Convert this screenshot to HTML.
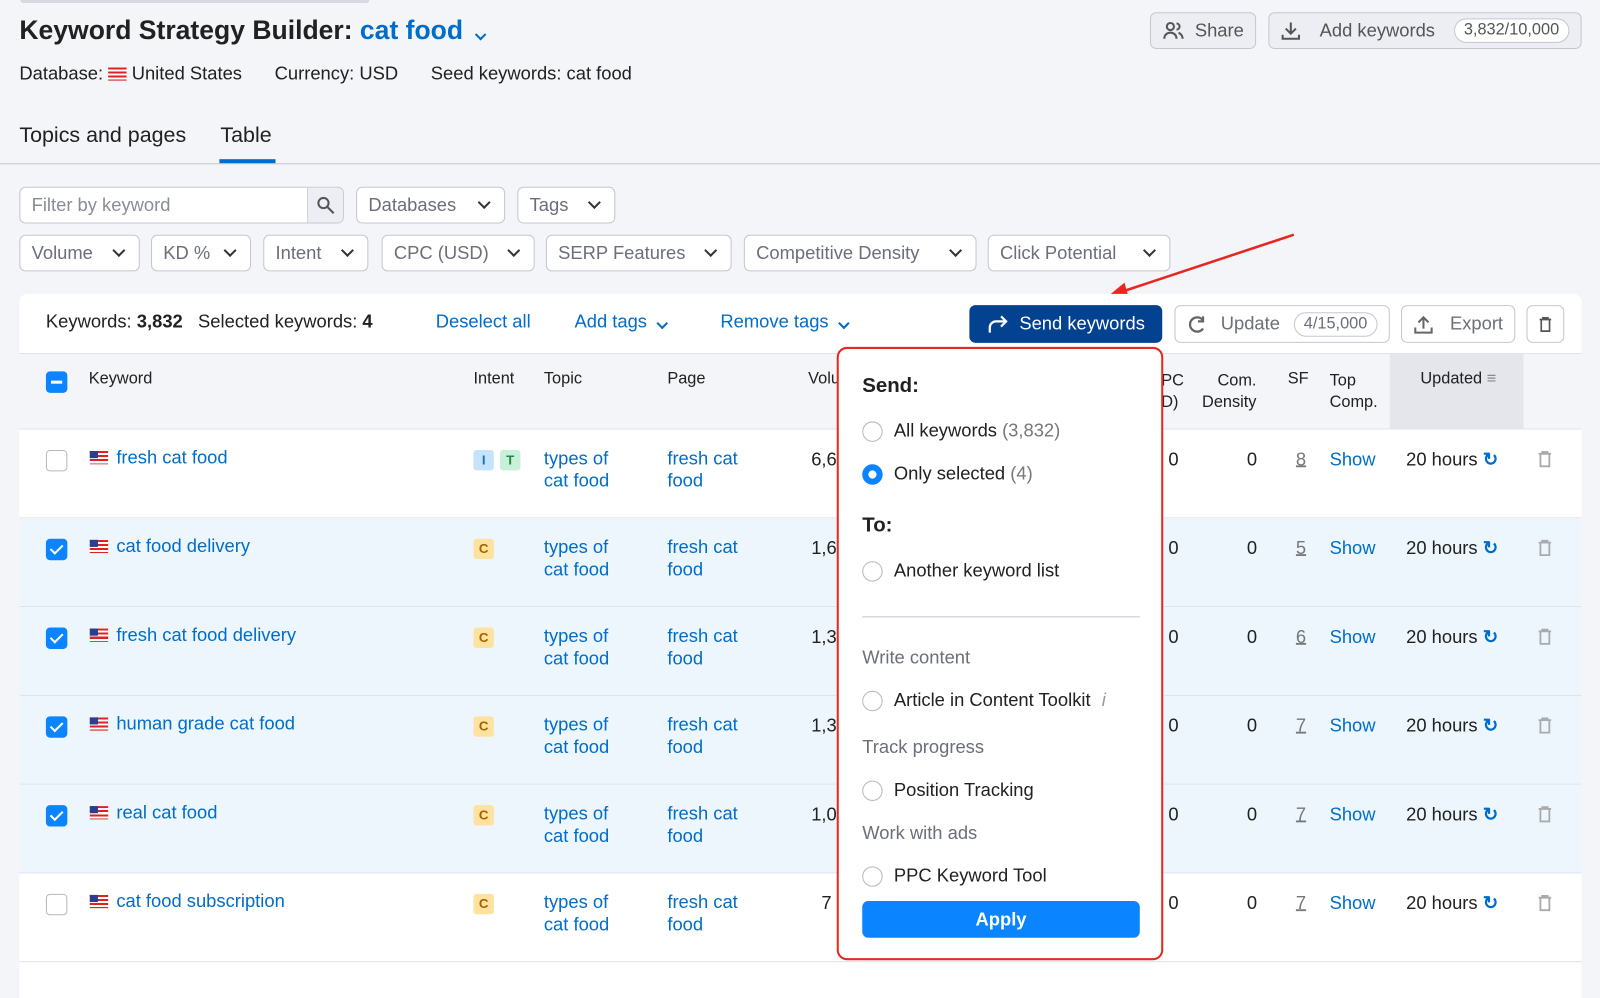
<!DOCTYPE html>
<html><head><meta charset="utf-8"><style>
*{box-sizing:border-box;margin:0;padding:0}
body{width:1600px;height:978px;overflow:hidden;background:#f4f5f9;font-family:"Liberation Sans",sans-serif;color:#212121;position:relative}
#w{position:absolute;left:0;top:0;width:1568px;height:960px;transform:scale(1.0204);transform-origin:0 0}
.a{position:absolute;white-space:nowrap}
.blue{color:#006dca}
.btn{position:absolute;border:1px solid #c4c7cf;border-radius:6px;background:#fff;height:36px;font-size:18px;color:#6c6e79;display:flex;align-items:center;padding:0 11px;justify-content:space-between}
.chev{display:inline-block;width:9px;height:9px;border-right:2.5px solid #333;border-bottom:2.5px solid #333;transform:rotate(45deg);margin:-5px 4px 0 14px}
.chevb{border-color:#006dca}
.row{position:absolute;left:19px;width:1531px;height:87px;border-bottom:1px solid #e0e1e9;font-size:18px}
.cb{position:absolute;left:26px;top:20px;width:21px;height:21px;border:1.5px solid #b5b8c2;border-radius:4px;background:#fff}
.cb.on{background:#0a84ff;border-color:#0a84ff}
.cb.on:after{content:"";position:absolute;left:6px;top:2px;width:5px;height:10px;border-right:2.5px solid #fff;border-bottom:2.5px solid #fff;transform:rotate(45deg)}
.flag{position:absolute;left:69px;top:21px;width:18px;height:13px;background:repeating-linear-gradient(#d22 0 2px,#fff 2px 4px)}
.flag:before{content:"";position:absolute;left:0;top:0;width:8px;height:7px;background:#2a3f8f}
.tag{position:absolute;top:20px;width:20px;height:20px;border-radius:3px;font-size:13px;font-weight:bold;text-align:center;line-height:20px}
.radio{position:absolute;left:845px;width:20px;height:20px;border:1.5px solid #b5b8c2;border-radius:50%;background:#fff}
.tr{position:absolute;left:1488px;top:20px}
</style></head><body><div id="w">
<div class="a" style="left:20px;top:0;width:342px;height:3px;background:#d8d9e0;border-radius:0 0 4px 4px"></div>
<div class="a" style="left:19px;top:14px;font-size:26px;font-weight:bold">Keyword Strategy Builder: <span class="blue">cat food</span> <span class="chev chevb" style="margin-left:6px;width:8px;height:8px"></span></div>
<div class="a" style="left:19px;top:62px;font-size:18px">Database: <span style="display:inline-block;width:18px;height:13px;background:repeating-linear-gradient(#d22 0 2px,#fff 2px 4px);position:relative;vertical-align:-1px"></span> United States<span style="margin-left:32px">Currency: USD</span><span style="margin-left:32px">Seed keywords: cat food</span></div>
<div class="btn" style="left:1127px;top:12px;width:104px;color:#555;background:#eceef3"><svg width="22" height="20" viewBox="0 0 22 20" fill="none" stroke="#555" stroke-width="2"><circle cx="8" cy="6" r="3.5"/><path d="M2 18c0-4 3-6 6-6s6 2 6 6M14 3a3 3 0 010 6M16 12c2 1 4 3 4 6"/></svg><span>Share</span></div>
<div class="btn" style="left:1243px;top:12px;width:307px;color:#555;background:#eceef3"><svg width="20" height="20" viewBox="0 0 20 20" fill="none" stroke="#555" stroke-width="2"><path d="M10 2v11M5 8l5 5 5-5M2 14v4h16v-4"/></svg><span>Add keywords</span><span style="border:1px solid #c4c7cf;border-radius:14px;padding:2px 9px;font-size:16px;background:#fff">3,832/10,000</span></div>
<div class="a" style="left:19px;top:121px;font-size:21px">Topics and pages</div>
<div class="a" style="left:216px;top:121px;font-size:21px">Table</div>
<div class="a" style="left:215px;top:156px;width:55px;height:4px;background:#006dca"></div>
<div class="a" style="left:0;top:160px;width:1600px;height:1px;background:#c4c7cf"></div>
<div class="btn" style="left:19px;top:183px;width:318px;padding:0"><span style="padding-left:11px;color:#8a8c96">Filter by keyword</span><span style="width:35px;height:34px;border-left:1px solid #c4c7cf;background:#eceef3;display:flex;align-items:center;justify-content:center;border-radius:0 6px 6px 0"><svg width="18" height="18" viewBox="0 0 18 18" fill="none" stroke="#555" stroke-width="2"><circle cx="7" cy="7" r="5"/><path d="M11 11l6 6"/></svg></span></div>
<div class="btn" style="left:349px;top:183px;width:146px">Databases<span class="chev"></span></div>
<div class="btn" style="left:507px;top:183px;width:96px">Tags<span class="chev"></span></div>
<div class="btn" style="left:19px;top:230px;width:118px">Volume<span class="chev"></span></div>
<div class="btn" style="left:148px;top:230px;width:98px">KD %<span class="chev"></span></div>
<div class="btn" style="left:258px;top:230px;width:103px">Intent<span class="chev"></span></div>
<div class="btn" style="left:374px;top:230px;width:150px">CPC (USD)<span class="chev"></span></div>
<div class="btn" style="left:535px;top:230px;width:182px">SERP Features<span class="chev"></span></div>
<div class="btn" style="left:729px;top:230px;width:228px">Competitive Density<span class="chev"></span></div>
<div class="btn" style="left:968px;top:230px;width:179px">Click Potential<span class="chev"></span></div>
<svg class="a" style="left:1080px;top:225px" width="195" height="70"><line x1="188" y1="5" x2="16" y2="62" stroke="#e8281e" stroke-width="2.5"/><polygon points="5,66 22,52 26,66" fill="#e8281e"/></svg>
<div class="a" style="left:19px;top:288px;width:1531px;height:690px;background:#fff;border-radius:8px 8px 0 0"></div>
<div class="a" style="left:45px;top:305px;font-size:18px">Keywords: <b>3,832</b>&nbsp;&nbsp;&nbsp;Selected keywords: <b>4</b></div>
<div class="a blue" style="left:427px;top:305px;font-size:18px">Deselect all</div>
<div class="a blue" style="left:563px;top:305px;font-size:18px">Add tags <span class="chev chevb" style="margin-left:6px;width:8px;height:8px"></span></div>
<div class="a blue" style="left:706px;top:305px;font-size:18px">Remove tags <span class="chev chevb" style="margin-left:6px;width:8px;height:8px"></span></div>
<div class="a" style="left:950px;top:299px;width:189px;height:37px;background:#034191;border-radius:6px;color:#fff;font-size:18px;display:flex;align-items:center;justify-content:center"><svg width="22" height="20" viewBox="0 0 22 20" fill="none" stroke="#fff" stroke-width="2.2"><path d="M3 18v-5a6 6 0 016-6h10M14 2l5 5-5 5"/></svg>&nbsp; Send keywords</div>
<div class="btn" style="left:1151px;top:299px;width:211px;height:37px"><svg width="20" height="20" viewBox="0 0 20 20" fill="none" stroke="#666" stroke-width="2.2"><path d="M16 6a7 7 0 100 8M16 2v5h-5"/></svg><span>Update</span><span style="border:1px solid #c4c7cf;border-radius:14px;padding:2px 9px;font-size:16px">4/15,000</span></div>
<div class="btn" style="left:1373px;top:299px;width:112px;height:37px"><svg width="20" height="20" viewBox="0 0 20 20" fill="none" stroke="#666" stroke-width="2"><path d="M10 14V3M5 8l5-5 5 5M2 13v5h16v-5"/></svg><span>Export</span></div>
<div class="btn" style="left:1496px;top:299px;width:37px;height:37px;justify-content:center"><svg width="16" height="20" viewBox="0 0 16 20" fill="none" stroke="#555" stroke-width="2"><path d="M1 4h14M5 4V2h6v2M3 4v14h10V4"/></svg></div>
<div class="a" style="left:19px;top:346px;width:1531px;height:75px;background:#f4f5f9;border-top:1px solid #e0e1e9;border-bottom:1px solid #e0e1e9"></div>
<div class="a" style="left:1362px;top:347px;width:131px;height:73px;background:#e5e6ec"></div>
<div class="a" style="left:45px;top:364px;width:21px;height:21px;background:#0a84ff;border-radius:4px"><div style="margin:9px 5px;height:3px;background:#fff"></div></div>
<div class="a" style="left:87px;top:363px;font-size:16px">Keyword</div>
<div class="a" style="left:464px;top:363px;font-size:16px">Intent</div>
<div class="a" style="left:533px;top:363px;font-size:16px">Topic</div>
<div class="a" style="left:654px;top:363px;font-size:16px">Page</div>
<div class="a" style="left:792px;top:363px;font-size:16px">Volu</div>
<div class="a" style="left:1138px;top:363px;font-size:16px;line-height:21px">PC<br>D)</div>
<div class="a" style="left:1178px;top:363px;font-size:16px;line-height:21px;text-align:right">&nbsp;&nbsp;Com.<br>Density</div>
<div class="a" style="left:1262px;top:363px;font-size:16px">SF</div>
<div class="a" style="left:1303px;top:363px;font-size:16px;line-height:21px">Top<br>Comp.</div>
<div class="a" style="left:1392px;top:363px;font-size:16px">Updated <span style="color:#888">≡</span></div>

<div class="row" style="top:421px;background:#fff"><div class="cb"></div><div class="flag"></div><span class="a blue" style="left:95px;top:17px">fresh cat food</span><div class="tag" style="left:445px;background:#c5e4fb;color:#1a6fb0">I</div><div class="tag" style="left:471px;background:#c8f0d8;color:#1c8a4c">T</div><span class="a blue" style="left:514px;top:17px;line-height:22px">types of<br>cat food</span><span class="a blue" style="left:635px;top:17px;line-height:22px">fresh cat<br>food</span><span class="a" style="left:776px;top:19px">6,6</span><span class="a" style="left:1126px;top:19px">0</span><span class="a" style="left:1203px;top:19px">0</span><span class="a" style="left:1251px;top:19px;color:#777;text-decoration:underline dashed">8</span><span class="a blue" style="left:1284px;top:19px">Show</span><span class="a" style="left:1359px;top:19px">20 hours <span class="blue" style="font-weight:bold">↻</span></span><svg class="tr" width="14" height="18" viewBox="0 0 16 20" fill="none" stroke="#aaa" stroke-width="2"><path d="M1 4h14M5 4V2h6v2M3 4v14h10V4"/></svg></div>
<div class="row" style="top:508px;background:#edf6fd"><div class="cb on"></div><div class="flag"></div><span class="a blue" style="left:95px;top:17px">cat food delivery</span><div class="tag" style="left:445px;background:#ffe1a0;color:#a06400">C</div><span class="a blue" style="left:514px;top:17px;line-height:22px">types of<br>cat food</span><span class="a blue" style="left:635px;top:17px;line-height:22px">fresh cat<br>food</span><span class="a" style="left:776px;top:19px">1,6</span><span class="a" style="left:1126px;top:19px">0</span><span class="a" style="left:1203px;top:19px">0</span><span class="a" style="left:1251px;top:19px;color:#777;text-decoration:underline dashed">5</span><span class="a blue" style="left:1284px;top:19px">Show</span><span class="a" style="left:1359px;top:19px">20 hours <span class="blue" style="font-weight:bold">↻</span></span><svg class="tr" width="14" height="18" viewBox="0 0 16 20" fill="none" stroke="#aaa" stroke-width="2"><path d="M1 4h14M5 4V2h6v2M3 4v14h10V4"/></svg></div>
<div class="row" style="top:595px;background:#edf6fd"><div class="cb on"></div><div class="flag"></div><span class="a blue" style="left:95px;top:17px">fresh cat food delivery</span><div class="tag" style="left:445px;background:#ffe1a0;color:#a06400">C</div><span class="a blue" style="left:514px;top:17px;line-height:22px">types of<br>cat food</span><span class="a blue" style="left:635px;top:17px;line-height:22px">fresh cat<br>food</span><span class="a" style="left:776px;top:19px">1,3</span><span class="a" style="left:1126px;top:19px">0</span><span class="a" style="left:1203px;top:19px">0</span><span class="a" style="left:1251px;top:19px;color:#777;text-decoration:underline dashed">6</span><span class="a blue" style="left:1284px;top:19px">Show</span><span class="a" style="left:1359px;top:19px">20 hours <span class="blue" style="font-weight:bold">↻</span></span><svg class="tr" width="14" height="18" viewBox="0 0 16 20" fill="none" stroke="#aaa" stroke-width="2"><path d="M1 4h14M5 4V2h6v2M3 4v14h10V4"/></svg></div>
<div class="row" style="top:682px;background:#edf6fd"><div class="cb on"></div><div class="flag"></div><span class="a blue" style="left:95px;top:17px">human grade cat food</span><div class="tag" style="left:445px;background:#ffe1a0;color:#a06400">C</div><span class="a blue" style="left:514px;top:17px;line-height:22px">types of<br>cat food</span><span class="a blue" style="left:635px;top:17px;line-height:22px">fresh cat<br>food</span><span class="a" style="left:776px;top:19px">1,3</span><span class="a" style="left:1126px;top:19px">0</span><span class="a" style="left:1203px;top:19px">0</span><span class="a" style="left:1251px;top:19px;color:#777;text-decoration:underline dashed">7</span><span class="a blue" style="left:1284px;top:19px">Show</span><span class="a" style="left:1359px;top:19px">20 hours <span class="blue" style="font-weight:bold">↻</span></span><svg class="tr" width="14" height="18" viewBox="0 0 16 20" fill="none" stroke="#aaa" stroke-width="2"><path d="M1 4h14M5 4V2h6v2M3 4v14h10V4"/></svg></div>
<div class="row" style="top:769px;background:#edf6fd"><div class="cb on"></div><div class="flag"></div><span class="a blue" style="left:95px;top:17px">real cat food</span><div class="tag" style="left:445px;background:#ffe1a0;color:#a06400">C</div><span class="a blue" style="left:514px;top:17px;line-height:22px">types of<br>cat food</span><span class="a blue" style="left:635px;top:17px;line-height:22px">fresh cat<br>food</span><span class="a" style="left:776px;top:19px">1,0</span><span class="a" style="left:1126px;top:19px">0</span><span class="a" style="left:1203px;top:19px">0</span><span class="a" style="left:1251px;top:19px;color:#777;text-decoration:underline dashed">7</span><span class="a blue" style="left:1284px;top:19px">Show</span><span class="a" style="left:1359px;top:19px">20 hours <span class="blue" style="font-weight:bold">↻</span></span><svg class="tr" width="14" height="18" viewBox="0 0 16 20" fill="none" stroke="#aaa" stroke-width="2"><path d="M1 4h14M5 4V2h6v2M3 4v14h10V4"/></svg></div>
<div class="row" style="top:856px;background:#fff"><div class="cb"></div><div class="flag"></div><span class="a blue" style="left:95px;top:17px">cat food subscription</span><div class="tag" style="left:445px;background:#ffe1a0;color:#a06400">C</div><span class="a blue" style="left:514px;top:17px;line-height:22px">types of<br>cat food</span><span class="a blue" style="left:635px;top:17px;line-height:22px">fresh cat<br>food</span><span class="a" style="left:786px;top:19px">7</span><span class="a" style="left:1126px;top:19px">0</span><span class="a" style="left:1203px;top:19px">0</span><span class="a" style="left:1251px;top:19px;color:#777;text-decoration:underline dashed">7</span><span class="a blue" style="left:1284px;top:19px">Show</span><span class="a" style="left:1359px;top:19px">20 hours <span class="blue" style="font-weight:bold">↻</span></span><svg class="tr" width="14" height="18" viewBox="0 0 16 20" fill="none" stroke="#aaa" stroke-width="2"><path d="M1 4h14M5 4V2h6v2M3 4v14h10V4"/></svg></div>

<div class="a" style="left:820px;top:340px;width:320px;height:601px;background:#fff;border:2.5px solid #e8281e;border-radius:10px"></div>
<div class="a" style="left:845px;top:367px;font-size:20px;font-weight:bold">Send:</div>
<div class="radio" style="top:413px"></div><div class="a" style="left:876px;top:412px;font-size:18px">All keywords <span style="color:#777">(3,832)</span></div>
<div class="radio" style="top:455px;border:6px solid #0a84ff"></div><div class="a" style="left:876px;top:454px;font-size:18px">Only selected <span style="color:#777">(4)</span></div>
<div class="a" style="left:845px;top:504px;font-size:20px;font-weight:bold">To:</div>
<div class="radio" style="top:550px"></div><div class="a" style="left:876px;top:549px;font-size:18px">Another keyword list</div>
<div class="a" style="left:845px;top:604px;width:272px;height:1px;background:#c4c7cf"></div>
<div class="a" style="left:845px;top:634px;font-size:18px;color:#6c6e79">Write content</div>
<div class="radio" style="top:677px"></div><div class="a" style="left:876px;top:676px;font-size:18px">Article in Content Toolkit <i style="color:#999;margin-left:6px">i</i></div>
<div class="a" style="left:845px;top:722px;font-size:18px;color:#6c6e79">Track progress</div>
<div class="radio" style="top:765px"></div><div class="a" style="left:876px;top:764px;font-size:18px">Position Tracking</div>
<div class="a" style="left:845px;top:806px;font-size:18px;color:#6c6e79">Work with ads</div>
<div class="radio" style="top:849px"></div><div class="a" style="left:876px;top:848px;font-size:18px">PPC Keyword Tool</div>
<div class="a" style="left:845px;top:883px;width:272px;height:36px;background:#0a84ff;border-radius:6px;color:#fff;font-size:18px;font-weight:bold;text-align:center;line-height:36px">Apply</div>
</div></body></html>
